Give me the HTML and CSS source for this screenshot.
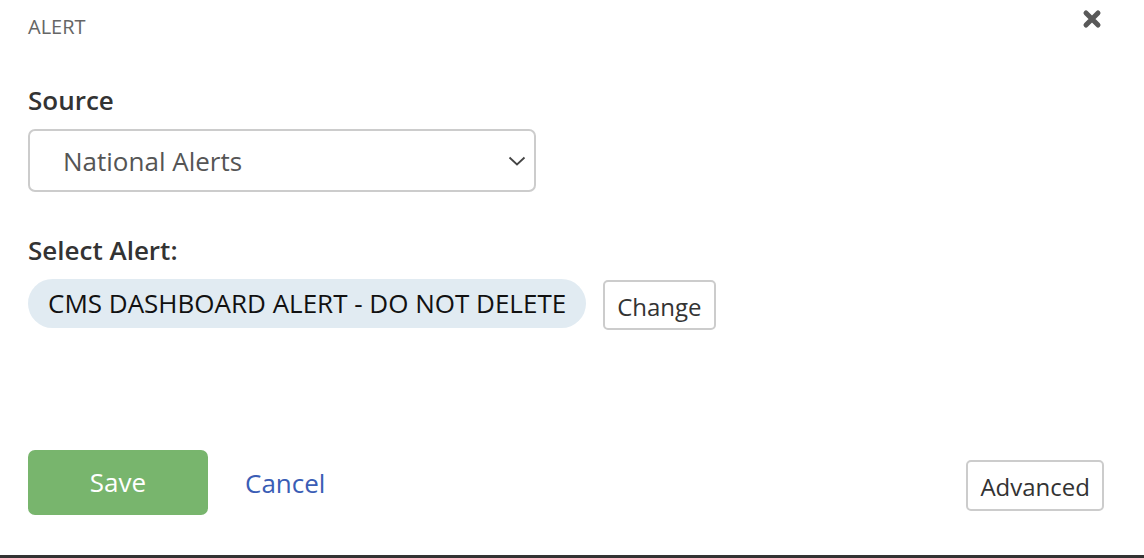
FILE: index.html
```html
<!DOCTYPE html>
<html lang="en">
<head>
  <meta charset="utf-8">
  <title>Alert</title>
  <link rel="stylesheet" href="styles.css">
</head>
<body>
<div class="dialog">
  <div class="dialog-head">
    <span class="dialog-title">ALERT</span>
    <a class="close" href="javascript:void(0);">
      <svg width="20" height="20" viewBox="0 0 20 20">
        <path d="M4 4 L16 16 M16 4 L4 16" stroke="#595959" stroke-width="5" stroke-linecap="round"/>
      </svg>
    </a>
  </div>

  <div class="field">
    <label class="label">Source</label>
    <div class="select">
      <span>National Alerts</span>
      <svg width="18" height="12" viewBox="0 0 18 12">
        <path d="M1.5 2.5 L9 9.5 L16.5 2.5" fill="none" stroke="#444" stroke-width="1.8"/>
      </svg>
    </div>
  </div>

  <div class="field">
    <label class="label">Select Alert:</label>
    <div class="picked">
      <span class="pill">CMS DASHBOARD ALERT - DO NOT DELETE</span>
      <a class="btn-plain" href="javascript:void(0);">Change</a>
    </div>
  </div>

  <div class="dialog-foot">
    <div class="actions">
      <a class="btn-save" href="javascript:void(0);">Save</a>
      <a class="cancel" href="javascript:void(0);">Cancel</a>
    </div>
    <a class="btn-plain advanced" href="javascript:void(0);">Advanced</a>
  </div>
</div>
</body>
</html>
```

FILE: styles.css
```css
* {
  margin: 0;
  padding: 0;
  box-sizing: border-box;
  font-family: "Open Sans", "Liberation Sans", sans-serif;
}

html, body {
  height: 100%;
  background: #fff;
}

a {
  text-decoration: none;
}

.dialog {
  height: 558px;
  padding: 0 28px;
  border-bottom: 3px solid #333;
  display: flex;
  flex-direction: column;
}

.dialog-head {
  display: flex;
  justify-content: space-between;
  align-items: flex-start;
  height: 82px;
  padding-top: 13px;
}

.dialog-title {
  font-size: 20px;
  line-height: 28px;
  color: #666;
}

.close {
  margin-top: -4px;
  margin-right: 14px;
}

.field {
  display: flex;
  flex-direction: column;
}

.label {
  font-size: 26px;
  font-weight: 600;
  color: #333;
  line-height: 36px;
  margin-bottom: 11px;
}

.select {
  width: 508px;
  height: 63px;
  border: 2px solid #ccc;
  border-radius: 7px;
  display: flex;
  align-items: center;
  justify-content: space-between;
  padding: 0 8px 0 33px;
  font-size: 26px;
  color: #555;
  margin-bottom: 40px;
}

.picked {
  display: flex;
  align-items: flex-start;
  gap: 17px;
}

.pill {
  background: #e1ebf2;
  border-radius: 25px;
  height: 49px;
  line-height: 48px;
  padding: 0 20px;
  font-size: 26px;
  color: #111;
}

.btn-plain {
  border: 2px solid #ccc;
  border-radius: 5px;
  background: #fff;
  color: #333;
  font-size: 24px;
  padding: 0 12px;
  height: 51px;
  line-height: 49px;
}

.picked .btn-plain {
  height: 50px;
  margin-top: 1px;
}

.dialog-foot {
  margin-top: auto;
  margin-bottom: 40px;
  display: flex;
  justify-content: space-between;
  align-items: flex-end;
  padding-right: 12px;
}

.actions {
  display: flex;
  align-items: center;
  gap: 37px;
}

.btn-save {
  width: 180px;
  height: 65px;
  line-height: 65px;
  text-align: center;
  border-radius: 7px;
  background: #78b56d;
  color: #fff;
  font-size: 26px;
}

.cancel {
  color: #3a5db5;
  font-size: 26px;
}

.advanced {
  margin-bottom: 4px;
}
```
